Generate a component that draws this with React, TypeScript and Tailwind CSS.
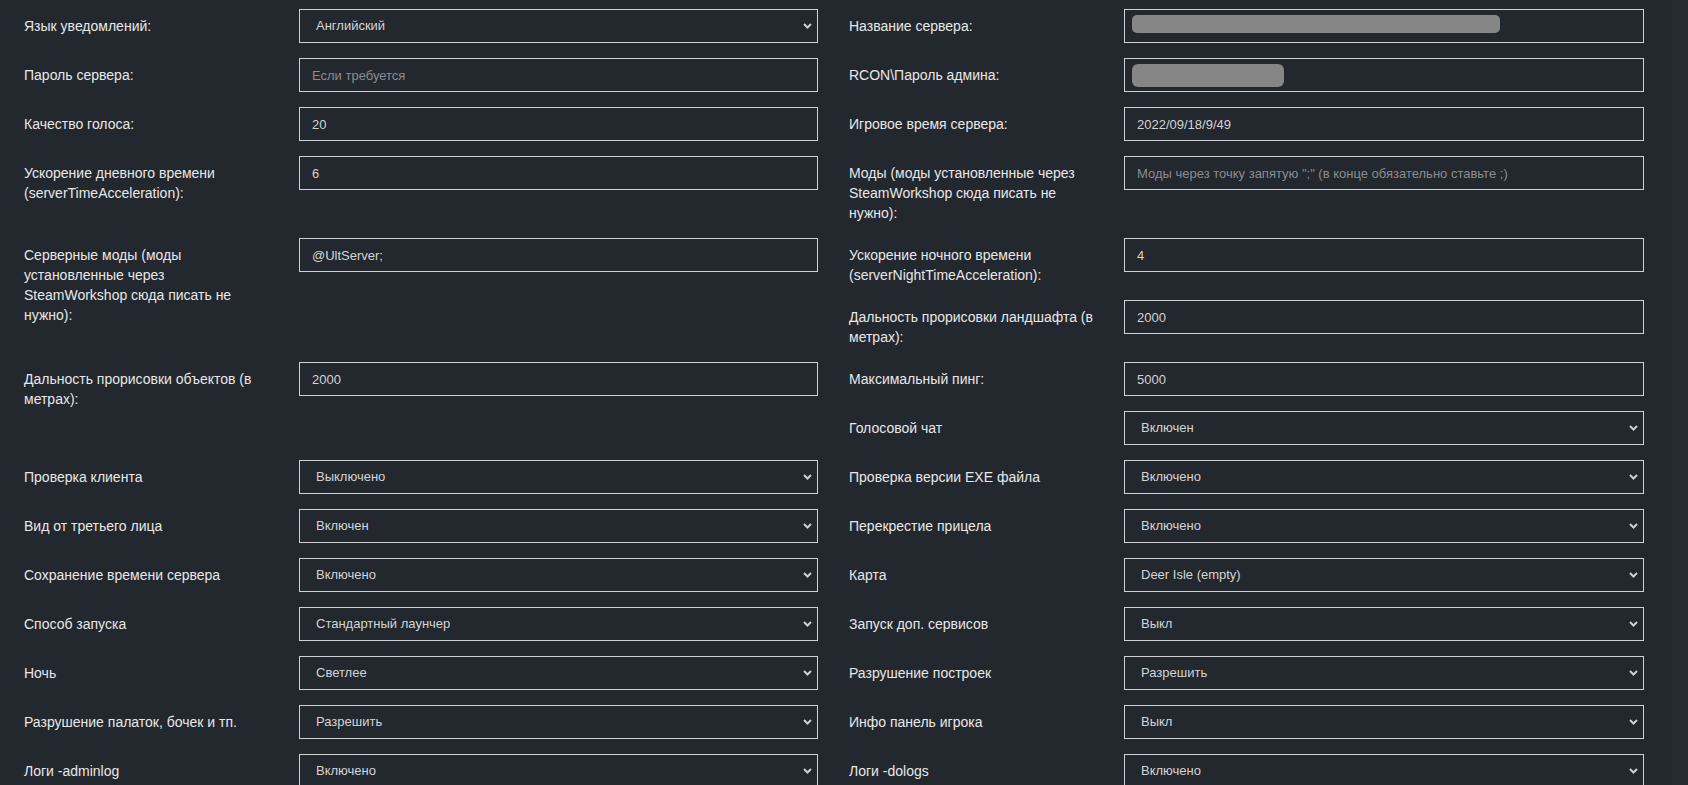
type Field = {
  label: string;
  kind: "input" | "select" | "hidden";
  value?: string;
  placeholder?: string;
  blob?: "long" | "short";
  span?: boolean;
};

const left: Field[] = [
  { label: "Язык уведомлений:", kind: "select", value: "Английский" },
  { label: "Пароль сервера:", kind: "input", placeholder: "Если требуется" },
  { label: "Качество голоса:", kind: "input", value: "20" },
  { label: "Ускорение дневного времени (serverTimeAcceleration):", kind: "input", value: "6" },
  {
    label: "Серверные моды (моды установленные через SteamWorkshop сюда писать не нужно):",
    kind: "input",
    value: "@UltServer;",
    span: true,
  },
  { label: "Дальность прорисовки объектов (в метрах):", kind: "input", value: "2000", span: true },
  { label: "Проверка клиента", kind: "select", value: "Выключено" },
  { label: "Вид от третьего лица", kind: "select", value: "Включен" },
  { label: "Сохранение времени сервера", kind: "select", value: "Включено" },
  { label: "Способ запуска", kind: "select", value: "Стандартный лаунчер" },
  { label: "Ночь", kind: "select", value: "Светлее" },
  { label: "Разрушение палаток, бочек и тп.", kind: "select", value: "Разрешить" },
  { label: "Логи -adminlog", kind: "select", value: "Включено" },
];

const right: Field[] = [
  { label: "Название сервера:", kind: "hidden", blob: "long" },
  { label: "RCON\\Пароль админа:", kind: "hidden", blob: "short" },
  { label: "Игровое время сервера:", kind: "input", value: "2022/09/18/9/49" },
  {
    label: "Моды (моды установленные через SteamWorkshop сюда писать не нужно):",
    kind: "input",
    placeholder: 'Моды через точку запятую ";" (в конце обязательно ставьте ;)',
  },
  { label: "Ускорение ночного времени (serverNightTimeAcceleration):", kind: "input", value: "4" },
  { label: "Дальность прорисовки ландшафта (в метрах):", kind: "input", value: "2000" },
  { label: "Максимальный пинг:", kind: "input", value: "5000" },
  { label: "Голосовой чат", kind: "select", value: "Включен" },
  { label: "Проверка версии EXE файла", kind: "select", value: "Включено" },
  { label: "Перекрестие прицела", kind: "select", value: "Включено" },
  { label: "Карта", kind: "select", value: "Deer Isle (empty)" },
  { label: "Запуск доп. сервисов", kind: "select", value: "Выкл" },
  { label: "Разрушение построек", kind: "select", value: "Разрешить" },
  { label: "Инфо панель игрока", kind: "select", value: "Выкл" },
  { label: "Логи -dologs", kind: "select", value: "Включено" },
];

// grid order: left, right pairs; spanning left items take two right rows
function ordered() {
  const out: Field[] = [];
  let r = 0;
  for (const l of left) {
    out.push(l);
    out.push(right[r++]);
    if (l.span) out.push(right[r++]);
  }
  while (r < right.length) out.push(right[r++]);
  return out;
}

function Chevron() {
  return (
    <svg
      className="pointer-events-none absolute right-[6px] top-1/2 -translate-y-1/2"
      width="9"
      height="6"
      viewBox="0 0 9 6"
      fill="none"
    >
      <path d="M1 1l3.5 3.5L8 1" stroke="#cfcfcf" strokeWidth="2" />
    </svg>
  );
}

function Control({ f }: { f: Field }) {
  const box = "h-[34px] w-full border border-[#cfd1d4] bg-[#23272e] text-[13px] text-[#d4d4d4] outline-none";
  if (f.kind === "select") {
    return (
      <div className="relative">
        <select
          defaultValue={f.value}
          className={`${box} appearance-none pl-[16px] pr-6`}
        >
          <option>{f.value}</option>
        </select>
        <Chevron />
      </div>
    );
  }
  if (f.kind === "hidden") {
    return (
      <div className={`${box} flex items-center pl-[7px]`}>
        {f.blob === "long" ? (
          <div className="-mt-[4px] h-[18px] w-[368px] rounded-[5px] bg-[#868686]" />
        ) : (
          <div className="h-[23px] w-[152px] rounded-[6px] bg-[#868686]" />
        )}
      </div>
    );
  }
  return (
    <input
      defaultValue={f.value}
      placeholder={f.placeholder}
      className={`${box} px-3 placeholder:text-[#8c8d90]`}
    />
  );
}

export default function App() {
  const items = ordered();
  return (
    <div
      className="flex h-screen overflow-hidden bg-[#23272e] text-[14px] leading-5 text-[#e8e8e8]"
      style={{ fontFamily: '"Liberation Sans", Arial, sans-serif' }}
    >
      <div className="flex-1 pl-6 pt-[9px]">
        <div className="grid grid-cols-[794px_795px] gap-x-[31px]">
          {items.map((f, i) => (
            <div key={i} className={`flex pb-[15px] ${f.span ? "row-span-2" : ""}`}>
              <label className="w-[275px] shrink-0 pr-[30px] pt-[7px]">{f.label}</label>
              <div className="flex-1">
                <Control f={f} />
              </div>
            </div>
          ))}
        </div>
      </div>
      <div className="w-4 shrink-0 bg-[#272b31]" />
    </div>
  );
}
